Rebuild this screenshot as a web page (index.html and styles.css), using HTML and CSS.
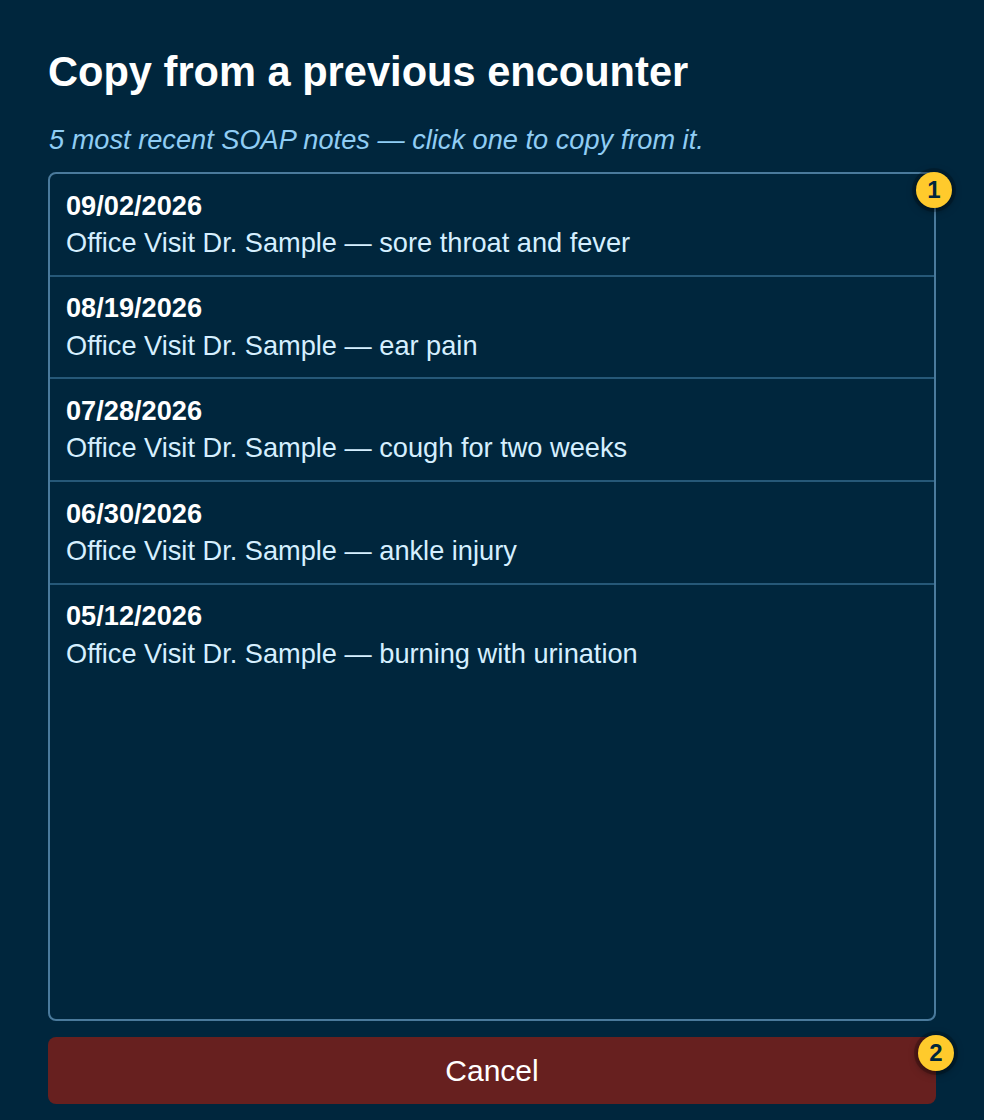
FILE: index.html
```html
<!DOCTYPE html>
<html lang="en">
<head>
  <meta charset="UTF-8" />
  <title>Copy from a previous encounter</title>
  <link rel="stylesheet" href="styles.css">
</head>
<body>

<div class="dialog">
  <h1>Copy from a previous encounter</h1>
  <p class="hint">5 most recent SOAP notes — click one to copy from it.</p>

  <div class="list-wrap">
    <div class="note-list">
      <div class="note">
        <strong>09/02/2026</strong>
        <span>Office Visit Dr. Sample — sore throat and fever</span>
      </div>
      <div class="note">
        <strong>08/19/2026</strong>
        <span>Office Visit Dr. Sample — ear pain</span>
      </div>
      <div class="note">
        <strong>07/28/2026</strong>
        <span>Office Visit Dr. Sample — cough for two weeks</span>
      </div>
      <div class="note">
        <strong>06/30/2026</strong>
        <span>Office Visit Dr. Sample — ankle injury</span>
      </div>
      <div class="note">
        <strong>05/12/2026</strong>
        <span>Office Visit Dr. Sample — burning with urination</span>
      </div>
    </div>
    <div class="badge badge-list">1</div>
  </div>

  <div class="cancel-wrap">
    <button class="cancel">Cancel</button>
    <div class="badge badge-cancel">2</div>
  </div>
</div>

</body>
</html>
```

FILE: styles.css
```css
html, body {
  height: 100%;
}

body {
  margin: 0;
  background-color: #00263d;
  color: #fff;
  font-family: "Liberation Sans", Arial, sans-serif;
}

.dialog {
  box-sizing: border-box;
  height: 1120px;
  padding: 49px 48px 16px;
  display: flex;
  flex-direction: column;
}

h1 {
  margin: 0;
  font-size: 41.6px;
  line-height: 46px;
  font-weight: bold;
}

.hint {
  margin: 29px 0 17px;
  padding-left: 1px;
  font-size: 27.2px;
  line-height: 31px;
  font-style: italic;
  color: #90cdf4;
}

.list-wrap {
  position: relative;
  flex: 1;
  display: flex;
  min-height: 0;
}

.note-list {
  box-sizing: border-box;
  flex: 1;
  border: 2px solid #4a7a9c;
  border-radius: 8px;
  overflow: hidden;
}

.note {
  box-sizing: border-box;
  display: flex;
  flex-direction: column;
  height: 102.7px;
  padding: 12.6px 16px 0;
  border-bottom: 2px solid #265878;
  font-size: 27.2px;
  line-height: 37.4px;
  color: #d5efff;
}

.note:last-child {
  border-bottom: none;
}

.note strong {
  color: #fff;
}

.cancel-wrap {
  position: relative;
  margin-top: 16px;
}

.cancel {
  display: block;
  width: 100%;
  height: 67px;
  background-color: #67201f;
  color: #fff;
  border: none;
  border-radius: 8px;
  font-family: inherit;
  font-size: 30px;
}

.badge {
  position: absolute;
  box-sizing: border-box;
  width: 36px;
  height: 36px;
  border-radius: 50%;
  background-color: #ffca2c;
  color: #00263d;
  font-size: 24px;
  font-weight: bold;
  line-height: 36px;
  text-align: center;
  box-shadow: 0 0 0 4px rgba(0, 0, 0, 0.2), 0 2px 8px rgba(0, 0, 0, 0.5);
}

.badge-list {
  top: 0;
  right: -16px;
}

.badge-cancel {
  top: -2px;
  right: -18px;
}
```
